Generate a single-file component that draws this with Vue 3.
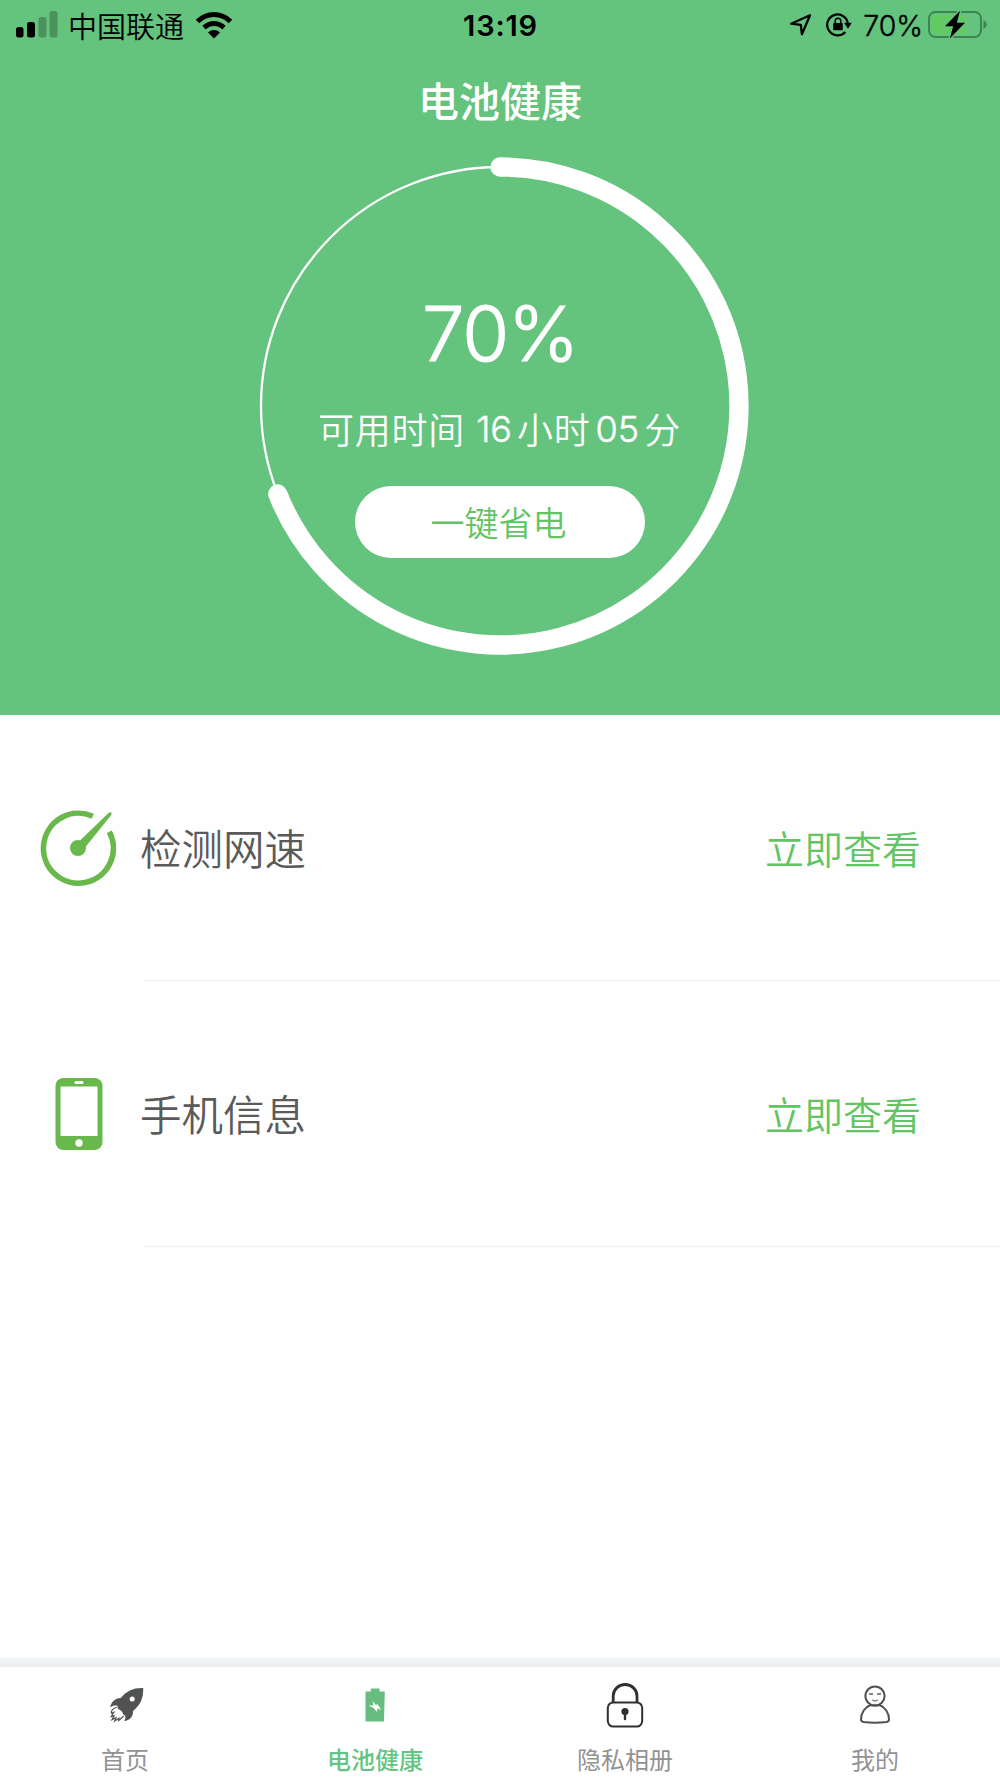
<template>
  <div class="page">
    <section class="hero">
      <div class="status-bar">
        <div class="status-left">
          <svg class="signal" width="42" height="28" viewBox="0 0 42 28">
            <rect x="0" y="16" width="7.5" height="10.5" rx="2.5" />
            <rect x="11" y="11" width="8" height="15.5" rx="2.5" />
            <rect x="22.5" y="6" width="8" height="20.5" rx="2.5" opacity="0.25" />
            <rect x="33.5" y="0" width="8" height="26.5" rx="2.5" opacity="0.25" />
          </svg>
          <span class="carrier">中国联通</span>
          <svg class="wifi" width="38" height="29" viewBox="0 0 38 29">
            <path d="M2.5 10.5 C12 1.2 26 1.2 35.5 10.5" />
            <path d="M9 16.7 C15 11.2 23 11.2 29 16.7" />
            <path class="solid" d="M13 21.5 C16.5 18.2 21.5 18.2 25 21.5 L19 27.5 Z" />
          </svg>
        </div>
        <span class="clock">13:19</span>
        <div class="status-right">
          <svg class="location" width="24" height="24" viewBox="0 0 24 24">
            <path d="M2.2 10.7 L21 2.2 L12.9 21.2 L11.8 11.8 Z" />
          </svg>
          <svg class="rotation" width="26" height="26" viewBox="0 0 26 26">
            <path class="ring" d="M19.3 19.9 A10.4 10.4 0 1 1 21.8 11" />
            <path d="M18 10.8 H25.8 L22 16.8 Z" />
            <rect x="7.2" y="11" width="9.6" height="7.3" rx="1" />
            <path class="shackle" d="M9.2 11.5 V9 A2.8 2.8 0 0 1 14.8 9 V11.5" />
          </svg>
          <span class="battery-text">{{ level }}%</span>
          <svg class="battery" width="60" height="30" viewBox="0 0 60 30">
            <rect x="1" y="2" width="52" height="25" rx="6.5" fill="none" stroke="#3d8452" stroke-width="2" />
            <rect x="4" y="5" width="34" height="19" rx="3.5" fill="#63c963" />
            <path d="M55.5 9.7 Q62 14.5 55.5 19.2 Z" fill="#3d8452" />
            <path
              d="M32 0.8 L17 16.3 H25.2 L21.8 28.5 L37 12.7 H28.8 Z"
              fill="#000"
              stroke="#64c37d"
              stroke-width="3"
              paint-order="stroke"
            />
          </svg>
        </div>
      </div>

      <h1 class="title">电池健康</h1>

      <div class="gauge">
        <svg class="gauge-ring" width="500" height="500" viewBox="0 0 500 500">
          <circle :cx="center" :cy="center" :r="radius" class="track" />
          <path :d="arcPath" class="progress" />
        </svg>
        <div class="gauge-body">
          <div class="percent">{{ level }}%</div>
          <div class="remaining">
            <span>可用时间</span>
            <span class="num hours">16</span>
            <span>小时</span>
            <span class="num minutes">05</span>
            <span>分</span>
          </div>
          <button class="save-btn">一键省电</button>
        </div>
      </div>
    </section>

    <main class="list">
      <div v-for="item in items" :key="item.icon" class="row">
        <div class="row-icon">
          <svg v-if="item.icon === 'speed'" class="speed" width="78" height="78" viewBox="0 0 78 78">
            <path
              d="M53.8 7.3 A35 35 0 1 0 70.3 22.7"
              fill="none"
              stroke="#69b84c"
              stroke-width="5.6"
            />
            <circle cx="39" cy="39" r="8" fill="#69b84c" />
            <path d="M40 32.5 L69.5 4 Q73.6 1.6 72.2 6 L46.5 38 Z" fill="#69b84c" />
          </svg>
          <svg v-else width="48" height="72" viewBox="0 0 48 72">
            <rect x="0.5" y="0" width="47" height="72" rx="8" fill="#69b84c" />
            <rect x="5.5" y="8.5" width="37" height="49.5" fill="#fff" />
            <rect x="19.5" y="3" width="9" height="3" rx="1.5" fill="#fff" />
            <circle cx="24" cy="65" r="3.7" fill="#fff" />
          </svg>
        </div>
        <div class="row-body">
          <span class="row-label">{{ item.label }}</span>
          <a class="row-link">立即查看</a>
        </div>
      </div>
    </main>

    <nav class="tabs">
      <div v-for="tab in tabs" :key="tab.icon" class="tab" :class="{ active: tab.active }">
        <div class="tab-icon">
          <svg v-if="tab.icon === 'rocket'" class="rocket" width="36" height="36" viewBox="0 0 36 36">
            <path
              d="M34.2 1 C24 0.7 17.5 4 11.8 11 C6 11.2 1.8 15.5 1.2 20.5 C4 18.2 6 18.3 8.4 18.8 L9 22 C11 22.5 14 25 14.2 27.5 C16.5 28 17.5 30 15.2 34 C20.5 33.5 24.2 30 24 24 C31.5 18 34.6 11 34.2 1 Z"
              fill="#505352"
            />
            <circle cx="23.2" cy="12" r="2.5" fill="#fff" />
            <path
              d="M7.7 20.2 C3.5 21.5 1.8 24 2.5 26.2 L4.8 25.3 L2.2 29.6 L5.1 28.7 L3 32.6 L7 30.7 L5.8 34 L10 31.2 L9.7 33.4 L14.8 29"
              fill="none"
              stroke="#505352"
              stroke-width="1.2"
            />
          </svg>
          <svg v-else-if="tab.icon === 'battery'" width="20" height="34" viewBox="0 0 20 34">
            <path d="M5.8 0.5 H14.5 V3.5 H19.8 L19 33.5 H0.5 V3.5 H5.8 Z" fill="#67bd80" />
            <path d="M7.4 13 L11.4 17.4 L12 15.6 L16.4 22 L12.6 20.2 L12 24 L8.4 19.8 L3.4 17.4 L8.6 17.4 Z" fill="#fff" />
          </svg>
          <svg v-else-if="tab.icon === 'lock'" class="lock" width="38" height="46" viewBox="0 0 38 46" fill="none" stroke="#303030">
            <path d="M7.2 19 V13 A11.9 11.5 0 0 1 31 13 V19" stroke-width="2.8" />
            <rect x="1.8" y="19.4" width="34.4" height="24.2" rx="5.5" stroke-width="2" />
            <circle cx="19" cy="28.5" r="3.6" fill="#303030" stroke="none" />
            <path d="M19 29 V36" stroke-width="2.4" stroke-linecap="round" />
          </svg>
          <svg v-else class="person" width="30" height="40" viewBox="0 0 30 40" fill="none" stroke="#505050" stroke-width="2">
            <circle cx="15" cy="11" r="9.6" />
            <path d="M10.5 20 C5 22 1 28 1 34.5 Q1 36.5 3.5 37 Q15 38.6 26.5 37 Q29 36.5 29 34.5 C29 28 25 22 19.5 20 Q15 21.2 10.5 20" />
            <path d="M9 9 H13 M17 9 H21" stroke="#888" stroke-width="2" />
            <path d="M12.2 14.8 Q15 17 17.8 14.8" stroke="#777" stroke-width="1.1" />
          </svg>
        </div>
        <span class="tab-label">{{ tab.label }}</span>
      </div>
    </nav>
  </div>
</template>

<script setup>
import { computed, ref } from 'vue'

const level = ref(70)

const center = 250
const radius = 239
// the drawn arc stops slightly before the real level because of the round cap
const sweep = computed(() => (level.value - 1) / 100)

const arcPath = computed(() => {
  const angle = sweep.value * Math.PI * 2
  const x = center + radius * Math.sin(angle)
  const y = center - radius * Math.cos(angle)
  const large = sweep.value > 0.5 ? 1 : 0
  return `M${center} ${center - radius} A${radius} ${radius} 0 ${large} 1 ${x} ${y}`
})

const items = [
  { icon: 'speed', label: '检测网速' },
  { icon: 'phone', label: '手机信息' }
]

const tabs = [
  { icon: 'rocket', label: '首页' },
  { icon: 'battery', label: '电池健康', active: true },
  { icon: 'lock', label: '隐私相册' },
  { icon: 'person', label: '我的' }
]
</script>

<style>
body {
  margin: 0;
  background: #fff;
}
</style>

<style scoped>
.page {
  display: flex;
  flex-direction: column;
  width: 1000px;
  height: 1778px;
  overflow: hidden;
  background: #fefefe;
  font-family: Inter, 'Noto Sans CJK SC', sans-serif;
}

svg {
  display: block;
  flex-shrink: 0;
}

.hero {
  height: 715px;
  background: #64c37d;
  color: #fff;
}

.status-bar {
  display: grid;
  grid-template-columns: 1fr auto 1fr;
  align-items: center;
  height: 50px;
  padding: 0 12px 0 16px;
  color: #000;
}

.status-left,
.status-right {
  display: flex;
  align-items: center;
}

.status-right {
  justify-content: flex-end;
}

.carrier {
  margin-left: 10px;
  font-family: 'Noto Sans CJK SC', sans-serif;
  font-size: 29px;
  font-weight: 350;
  line-height: 48px;
}

.wifi {
  margin-left: 11px;
}

.wifi path {
  fill: none;
  stroke: #000;
  stroke-width: 5;
}

.wifi .solid {
  fill: #000;
  stroke: none;
}

.clock {
  margin-right: 3px;
  font-size: 29px;
  font-weight: 600;
  letter-spacing: 0.8px;
}

.location {
  margin-right: 13px;
  fill: none;
  stroke: #000;
  stroke-width: 2.3;
  stroke-linejoin: round;
}

.rotation {
  margin-right: 11px;
}

.rotation .ring {
  fill: none;
  stroke: #000;
  stroke-width: 2.2;
}

.rotation .shackle {
  fill: none;
  stroke: #000;
  stroke-width: 1.6;
}

.battery-text {
  margin-right: 5px;
  font-size: 28.5px;
  font-weight: 300;
  -webkit-text-stroke: 0.4px currentColor;
}

.title {
  margin: 19px 0 0;
  font-family: 'Noto Sans CJK SC', sans-serif;
  font-size: 41px;
  font-weight: 500;
  line-height: 60px;
  text-align: center;
}

.gauge {
  display: grid;
  width: 500px;
  height: 500px;
  margin: 27px auto 0;
}

.gauge-ring,
.gauge-body {
  grid-area: 1 / 1;
}

.track {
  fill: none;
  stroke: #fff;
  stroke-width: 2.3;
}

.progress {
  fill: none;
  stroke: #fff;
  stroke-width: 19.3;
  stroke-linecap: round;
}

.gauge-body {
  display: flex;
  flex-direction: column;
  align-items: center;
}

.percent {
  margin-top: 132px;
  font-size: 76px;
  font-weight: 300;
  line-height: 90px;
  letter-spacing: -1.2px;
  -webkit-text-stroke: 1.1px currentColor;
}

.remaining {
  display: flex;
  align-items: center;
  margin-top: 24px;
  margin-right: 1px;
  font-family: 'Noto Sans CJK SC', sans-serif;
  font-size: 36px;
  font-weight: 350;
  line-height: 50px;
  letter-spacing: 0.8px;
  white-space: nowrap;
}

.num {
  margin-top: 2px;
  font-family: Inter, sans-serif;
  font-weight: 300;
  letter-spacing: 0;
  -webkit-text-stroke: 0.5px currentColor;
}

.hours {
  margin-right: 5px;
  margin-left: 11px;
}

.minutes {
  margin-right: 5px;
  margin-left: 5px;
}

.save-btn {
  width: 290px;
  height: 72px;
  margin-top: 32px;
  padding: 0 3px 0 0;
  border: 0;
  border-radius: 36px;
  background: #fff;
  color: #62c463;
  font-family: 'Noto Sans CJK SC', sans-serif;
  font-size: 34px;
  font-weight: 350;
  line-height: 70px;
}

.list {
  flex: 1;
}

.row {
  display: flex;
  height: 266px;
}

.row-icon {
  display: flex;
  align-items: center;
  justify-content: center;
  width: 78px;
  margin: 0 24px 0 40px;
}

.speed {
  margin-right: 2px;
}

.row-body {
  display: flex;
  align-items: center;
  flex: 1;
  justify-content: space-between;
  margin-left: 2px;
  padding-right: 79px;
  border-bottom: 1px solid #f1f1f1;
  font-family: 'Noto Sans CJK SC', sans-serif;
  font-weight: 350;
}

.row-label,
.row-link {
  padding-bottom: 1px;
}

.row-label {
  margin-left: -4px;
  color: #5a5a5a;
  font-size: 41.5px;
}

.row-link {
  color: #62c463;
  font-size: 39px;
}

.tabs {
  display: flex;
  height: 111px;
  padding-top: 10px;
  background: linear-gradient(#f6f7f8, #ebeced 10px, #fff 10px);
}

.tab {
  display: flex;
  flex: 1;
  flex-direction: column;
  align-items: center;
  color: #929292;
}

.tab-icon {
  display: flex;
  align-items: center;
  justify-content: center;
  height: 75px;
}

.rocket {
  margin-left: 4px;
}

.lock {
  margin-top: 2px;
}

.tab-label {
  font-family: 'Noto Sans CJK SC', sans-serif;
  font-size: 24px;
  line-height: 34px;
}

.tab.active {
  color: #65c47f;
}

.tab.active .tab-label {
  font-weight: 500;
}
</style>
